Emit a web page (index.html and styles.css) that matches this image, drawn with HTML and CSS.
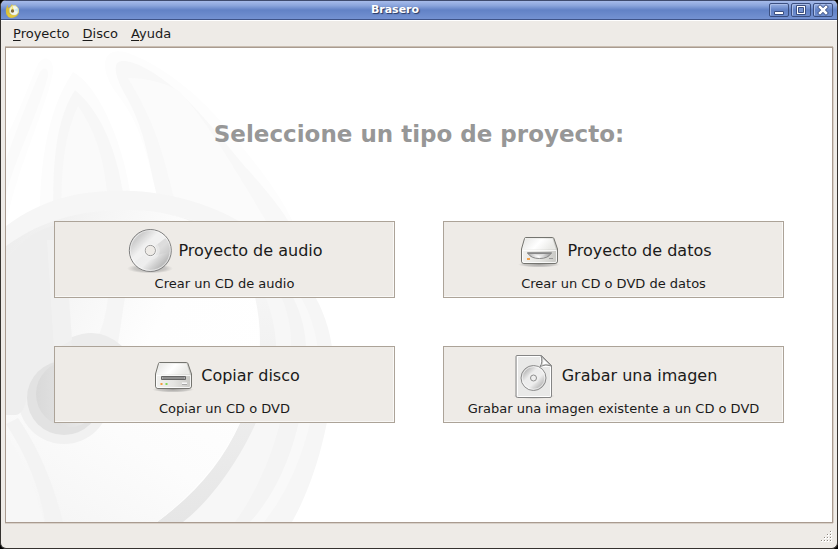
FILE: index.html
```html
<!DOCTYPE html>
<html lang="es">
<head>
<meta charset="utf-8">
<title>Brasero</title>
<link rel="stylesheet" href="styles.css">
</head>
<body>
<div class="window">
  <header class="titlebar">
    <svg class="app-icon" viewBox="0 0 16 16" aria-hidden="true">
      <path d="M2.500 1.500 3 5 5 4 7 1 8.500 4 10 1.500 13 5Q15.500 9 12 13 8 16 3.500 14 0 11 1 6Z" fill="#d8bd38"/>
      <ellipse cx="9" cy="7.500" rx="4.500" ry="5" fill="#f3f6ec" stroke="#d3d9a6"/>
      <path d="M7 2 9 7 6 9Z" fill="#f8e66b"/>
      <path d="M9 7 13 5 13 9Z" fill="#c9e9ed"/>
      <circle cx="7.500" cy="8" r="1.700" fill="#806c38"/>
      <path d="M2 9Q5 13 12 12 8 16 3.500 14Z" fill="#e4ca3c"/>
    </svg>
    <h1 class="title">Brasero</h1>
    <div class="controls">
      <button class="control" type="button" aria-label="Minimizar"><svg viewBox="0 0 18 12"><path d="M4.500 7.500h9v3h-9z" fill="#fff" stroke="#3b4f80"/></svg></button>
      <button class="control" type="button" aria-label="Maximizar"><svg viewBox="0 0 18 12"><path d="M4.500 1.500h9v9h-9z" fill="#fff" stroke="#3b4f80"/><path d="M6.500 3.500h5v5h-5z" fill="#7591cf" stroke="#3b4f80"/></svg></button>
      <button class="control" type="button" aria-label="Cerrar"><svg viewBox="0 0 18 12"><path d="m6 3 6 6m0-6-6 6" stroke="#3b4f80" stroke-width="4" stroke-linecap="square"/><path d="m6 3 6 6m0-6-6 6" stroke="#fff" stroke-width="2.500" stroke-linecap="square"/></svg></button>
    </div>
  </header>
  <nav class="menubar">
    <button class="menu" type="button"><u>P</u>royecto</button>
    <button class="menu" type="button"><u>D</u>isco</button>
    <button class="menu" type="button"><u>A</u>yuda</button>
  </nav>
  <main class="canvas">
    <svg class="backdrop" viewBox="6 48 340 474" aria-hidden="true">
      <defs>
        <linearGradient id="disc" x1="0" y1="0" x2="1" y2=".6"><stop offset="0" stop-color="#ececec"/><stop offset=".35" stop-color="#f7f7f7"/><stop offset=".6" stop-color="#fefefe"/><stop offset="1" stop-color="#fff"/></linearGradient>
        <linearGradient id="disc-low" x1="0" y1="1" x2="1" y2="0"><stop offset="0" stop-color="#f4f4f4"/><stop offset=".5" stop-color="#fcfcfc"/><stop offset="1" stop-color="#fff"/></linearGradient>
        <linearGradient id="rim" x1="0" y1="0" x2="0" y2="1"><stop offset="0" stop-color="#f8f8f8"/><stop offset="1" stop-color="#e6e6e6"/></linearGradient>
        <linearGradient id="hub" x1="0" y1="0" x2="1" y2="0"><stop offset="0" stop-color="#d9d9d9"/><stop offset="1" stop-color="#eee"/></linearGradient>
      </defs>
      <path d="M6 138C20 110 29 84 38 64 44 54 54 58 53 72 46 110 16 170 6 225Z" fill="#fdfdfd"/>
      <path d="M6 160C18 125 32 90 40 72 44 66 49 68 48 76 36 120 14 160 6 196Z" fill="#fafafa"/>
      <path d="M105 68C104 54 112 49 125 52 150 60 185 82 215 115 250 155 278 190 293 222L292 240 60 240 157 196C146 150 140 125 120 98Q107 82 105 68Z" fill="#fdfdfd"/>
      <path d="M116 66C117 58 130 60 145 68 190 92 225 145 250 172 270 195 282 210 290 224L130 222 157 196C146 150 145 132 127 98Q114 76 116 66Z" fill="#f8f8f8"/>
      <path d="M128 78C148 78 169 84 180 92 210 125 235 170 268 224L170 224Q178 205 173 194C161 145 153 120 128 78Z" fill="#fbfbfb"/>
      <path d="M73 72C96 84 121 135 130 192L132 240H40C38 170 46 112 73 72Z" fill="#fcfcfc"/>
      <path d="M75 90C52 125 52 180 54 240H128C124 170 108 118 75 90Z" fill="#f7f7f7"/>
      <path d="M78 106C62 140 60 180 62 240H110C108 180 103 142 78 106Z" fill="#fafafa"/>
      <path d="M6 226C46 196 88 189 133 191 250 197 333 280 333 364 332 430 310 490 292 522H6Z" fill="#f6f6f6"/>
      <path d="M6 246C46 217 88 209 133 210 240 216 318 280 318 360 317 430 290 490 264 522H6Z" fill="#f9f9f9"/>
      <path d="M6 246C46 217 88 209 133 210 240 216 306 280 306 350 307 430 280 490 250 522H6Z" fill="#f4f4f4"/>
      <path d="M6 246C46 217 88 209 133 210 225 216 289 270 291 340 291 410 266 480 235 522H6Z" fill="#f7f7f7"/>
      <path d="M243 255Q274 300 276 345C276 400 230 486 183 522H157Q250 450 260 350 260 300 243 255Z" fill="url(#rim)"/>
      <path d="M6 246C46 217 88 209 133 210 190 212 240 235 255 297 267 350 255 390 240 423Q215 480 157 522H6Z" fill="url(#disc)"/>
      <path d="M6 415 110 360H257Q253 395 240 423 212 480 157 522H6Z" fill="url(#disc-low)"/>
      <path d="M108 297H125L117 350 93 350Q106 322 108 297Z" fill="#f5f5f5"/>
      <path d="M6 424Q37 471 45 522H63Q48 462 18 418Z" fill="#f3f3f3"/>
      <path d="M6 434Q33 475 44 522H6Z" fill="#f7f7f7"/>
      <circle cx="64" cy="398" r="46" fill="#f1f1f1"/>
      <path d="M50 350Q92 318 122 346L113 420 50 425Z" fill="#ececec"/>
      <path d="M6 260Q30 230 56 225L72 347 48 365 27 396Q24 415 15 415H6Z" fill="#eee"/>
      <path d="M47 240H65L72 340 54 350Z" fill="#f1f1f1"/>
      <circle cx="64" cy="398" r="37" fill="#e2e2e2"/>
      <circle cx="69" cy="394" r="33" fill="url(#hub)"/>
    </svg>
    <section class="chooser">
      <h2 class="heading">Seleccione un tipo de proyecto:</h2>
      <div class="projects">
        <button class="project" type="button">
          <span class="project-title">
            <svg class="icon" viewBox="0 0 48 48" aria-hidden="true">
              <defs>
                <linearGradient id="cd" x1="0" y1="0" x2="1" y2="1"><stop offset="0" stop-color="#dedede"/><stop offset=".2" stop-color="#bdbdbd"/><stop offset=".38" stop-color="#ececec"/><stop offset=".6" stop-color="#eee"/><stop offset=".82" stop-color="#b9b9b9"/><stop offset="1" stop-color="#eee"/></linearGradient>
                <radialGradient id="shade"><stop offset="0" stop-color="#555" stop-opacity=".5"/><stop offset=".7" stop-color="#777" stop-opacity=".3"/><stop offset="1" stop-color="#888" stop-opacity="0"/></radialGradient>
              </defs>
              <ellipse cx="24" cy="41.500" rx="23" ry="5" fill="url(#shade)"/>
              <circle cx="24.300" cy="23.500" r="21" fill="url(#cd)" stroke="#808080"/>
              <circle cx="24.300" cy="23.500" r="19.900" fill="none" stroke="#fff" stroke-opacity=".6"/>
              <path d="M8 35.500 39.500 11Q34 4 24 4 5 6 5 23 5 30 8 35.500Z" fill="#fff" opacity=".25"/>
              <path d="M24 23 39.500 11Q45 17 44 25L30 28Z" fill="#ccc" opacity=".5"/>
              <circle cx="24.300" cy="23.500" r="9.500" fill="#eee" opacity=".55"/>
              <circle cx="24.300" cy="23.500" r="5.200" fill="#eeebe7" stroke="#999"/>
              <circle cx="24.300" cy="23.500" r="6.200" fill="none" stroke="#f6f6f6" stroke-opacity=".8"/>
            </svg>
            <span>Proyecto de audio</span>
          </span>
          <span class="project-note">Crear un CD de audio</span>
        </button>
        <button class="project" type="button">
          <span class="project-title">
            <svg class="icon" viewBox="0 0 48 48" aria-hidden="true">
              <defs>
                <linearGradient id="front" x1="0" y1="0" x2="1" y2="0"><stop offset="0" stop-color="#f2f2f0"/><stop offset=".5" stop-color="#e5e5e2"/><stop offset="1" stop-color="#c7c7c3"/></linearGradient>
                <linearGradient id="lid" x1="0" y1="0" x2="1" y2=".3"><stop offset="0" stop-color="#e5e5e3"/><stop offset=".55" stop-color="#fff"/><stop offset="1" stop-color="#eaeae7"/></linearGradient>
                <linearGradient id="tray" x1="0" y1="0" x2="1" y2="0"><stop offset="0" stop-color="#aaa"/><stop offset=".45" stop-color="#fff"/><stop offset="1" stop-color="#999"/></linearGradient>
              </defs>
              <ellipse cx="24" cy="37.500" rx="21" ry="3" fill="url(#shade)"/>
              <path d="M10.500 10.500h27q1 0 1.400 1l3.600 10.500v12q0 2.500-2.500 2.500H9q-2.500 0-2.500-2.500V22l3-10.500q.3-1 1-1Z" fill="url(#front)" stroke="#74746f"/>
              <path d="M11 11.500h26.500l3.500 11H8Z" fill="url(#lid)"/>
              <path d="M7.500 23.500h34v10.500q0 1.500-1.500 1.500H9q-1.500 0-1.500-1.500Z" fill="none" stroke="#fff" stroke-opacity=".8"/>
              <path d="M12.500 25.500h24v1h-24z" fill="#aaa" stroke="#999"/>
              <path d="M13 26.500Q16 31.500 24.500 31.500T36 26.500Z" fill="url(#tray)" stroke="#888"/>
              <path d="M19 27Q24.500 30 30 27Z" fill="#ddd"/>
              <path d="M12 32h3" stroke="#f3a34d" stroke-width="2"/>
              <path d="M34 31.500h4" stroke="#999"/>
            </svg>
            <span>Proyecto de datos</span>
          </span>
          <span class="project-note">Crear un CD o DVD de datos</span>
        </button>
        <button class="project" type="button">
          <span class="project-title">
            <svg class="icon" viewBox="0 0 48 48" aria-hidden="true">
              <ellipse cx="24" cy="37.500" rx="21" ry="3" fill="url(#shade)"/>
              <path d="M10.500 10.500h27q1 0 1.400 1l3.600 10.500v12q0 2.500-2.500 2.500H9q-2.500 0-2.500-2.500V22l3-10.500q.3-1 1-1Z" fill="url(#front)" stroke="#74746f"/>
              <path d="M11 11.500h26.500l3.500 11H8Z" fill="url(#lid)"/>
              <path d="M7.500 23.500h34v10.500q0 1.500-1.500 1.500H9q-1.500 0-1.500-1.500Z" fill="none" stroke="#fff" stroke-opacity=".8"/>
              <path d="M12.500 24.500h24v3h-24z" fill="#aaa" stroke="#666"/>
              <path d="M14 26h21" stroke="#777"/>
              <path d="M11.500 32h2" stroke="#f39a3d" stroke-width="2"/>
              <path d="M16.500 32h2" stroke="#83d957" stroke-width="2"/>
              <path d="M33 31.500h5" stroke="#f8f8f8" stroke-width="2"/><path d="M33 32.500h5" stroke="#aaa"/>
            </svg>
            <span>Copiar disco</span>
          </span>
          <span class="project-note">Copiar un CD o DVD</span>
        </button>
        <button class="project" type="button">
          <span class="project-title">
            <svg class="icon" viewBox="0 0 48 48" aria-hidden="true">
              <ellipse cx="24" cy="44" rx="21" ry="3" fill="url(#shade)"/>
              <path d="M7 3.500h24.500l10 10V44q0 1.500-1.500 1.500H7.500Q6 45.500 6 44V4.500q0-1 1-1Z" fill="#e9e9e8" stroke="#858585"/>
              <path d="M7.500 4.500h23v10h10v29q0 1-1 1h-31q-1 0-1-1Z" fill="none" stroke="#fff"/>
              <path d="M31 3.500q2 7-1 11 6-3 11.500-.5Z" fill="#d2d2d0" stroke="#858585"/>
              <path d="M33 7q1 3-.5 5.500 3-1 6-.5Z" fill="#fff"/>
              <circle cx="23.500" cy="26" r="12.500" fill="url(#cd)" stroke="#8d8d8d"/>
              <circle cx="23.500" cy="26" r="11.300" fill="none" stroke="#fff" stroke-opacity=".6"/>
              <circle cx="23.500" cy="26" r="5.500" fill="#eee" opacity=".7"/>
              <circle cx="23.500" cy="26" r="3" fill="#eee" stroke="#8d8d8d"/>
            </svg>
            <span>Grabar una imagen</span>
          </span>
          <span class="project-note">Grabar una imagen existente a un CD o DVD</span>
        </button>
      </div>
    </section>
  </main>
  <footer class="statusbar">
    <svg class="grip" viewBox="0 0 12 12" aria-hidden="true">
      <path d="M10 1h2v2h-2zM7 4h2v2H7zM10 4h2v2h-2zM4 7h2v2H4zM7 7h2v2H7zM10 7h2v2h-2zM1 10h2v2H1zM4 10h2v2H4zM7 10h2v2H7zM10 10h2v2h-2z" fill="#fff"/>
      <path d="M10 1h1v1h-1zM7 4h1v1H7zM10 4h1v1h-1zM4 7h1v1H4zM7 7h1v1H7zM10 7h1v1h-1zM1 10h1v1H1zM4 10h1v1H4zM7 10h1v1H7zM10 10h1v1h-1z" fill="#8f8981"/>
    </svg>
  </footer>
</div>
</body>
</html>
```
FILE: styles.css
```css
* {
  box-sizing: border-box;
}

body {
  margin: 0;
  background: #000;
  color: #1a1a1a;
  font: 13px/16px "DejaVu Sans", sans-serif;
}

button {
  margin: 0;
  padding: 0;
  border: 0;
  background: none;
  color: inherit;
  font: inherit;
}

.window {
  display: flex;
  flex-direction: column;
  min-height: 100vh;
  overflow: hidden;
  border: 1px solid #35322f;
  border-top: 0;
  border-radius: 6px;
  background: #eeebe7;
}

.titlebar {
  display: grid;
  grid-template-columns: auto 1fr auto;
  align-items: center;
  height: 20px;
  padding: 0 4px;
  border-top: 1px solid #3f4b6e;
  border-bottom: 1px solid #3f5489;
  background: linear-gradient(#a6bbea, #8ba5dc 25%, #6282c6 50%, #7492d2);
}

.app-icon {
  width: 16px;
  height: 16px;
  align-self: end;
}

.title {
  margin: 0;
  color: #fff;
  font-size: 11px;
  line-height: 16px;
  text-align: center;
  text-shadow: 1px 1px 1px #26365f;
}

.controls {
  display: flex;
  gap: 2px;
}

.control {
  display: flex;
  width: 20px;
  height: 14px;
  border: 1px solid #3b4f80;
  border-radius: 2px;
  box-shadow: inset 1px 1px #a9bce7;
}

.control svg {
  width: 18px;
  height: 12px;
}

.menubar {
  display: flex;
  gap: 13px;
  height: 27px;
  padding: 5px 12px;
  border-top: 1px solid #fff;
}

.menu u {
  text-underline-offset: 2px;
}

.canvas {
  position: relative;
  flex: 1;
  margin: 0 4px;
  border: 1px solid #a99b90;
  background: #fff;
  box-shadow: 0 -1px #c9beb2, 1px 0 #d8d0c8, 0 1px #d8d0c8;
  overflow: hidden;
}

.backdrop {
  position: absolute;
  left: 0;
  bottom: 0;
  width: 340px;
  height: 474px;
}

.chooser {
  position: relative;
  padding: 70px 48px 48px;
}

.heading {
  margin: 0 0 71px;
  color: #979797;
  font-size: 23px;
  line-height: 32px;
  text-align: center;
}

.projects {
  display: grid;
  grid-template-columns: 1fr 1fr;
  gap: 48px;
}

.project {
  display: flex;
  flex-direction: column;
  align-items: center;
  gap: 1px;
  padding: 5px;
  border: 1px solid #aca398;
  background: #eeebe7;
  box-shadow: inset -1px -1px #f9f8f6;
}

.project-title {
  display: flex;
  align-items: center;
  gap: 4px;
  font-size: 16px;
  line-height: 20px;
}

.icon {
  width: 48px;
  height: 48px;
}

.statusbar {
  display: flex;
  justify-content: flex-end;
  align-items: flex-end;
  height: 25px;
  padding: 0 5px 6px;
}

.grip {
  width: 12px;
  height: 12px;
}
```
